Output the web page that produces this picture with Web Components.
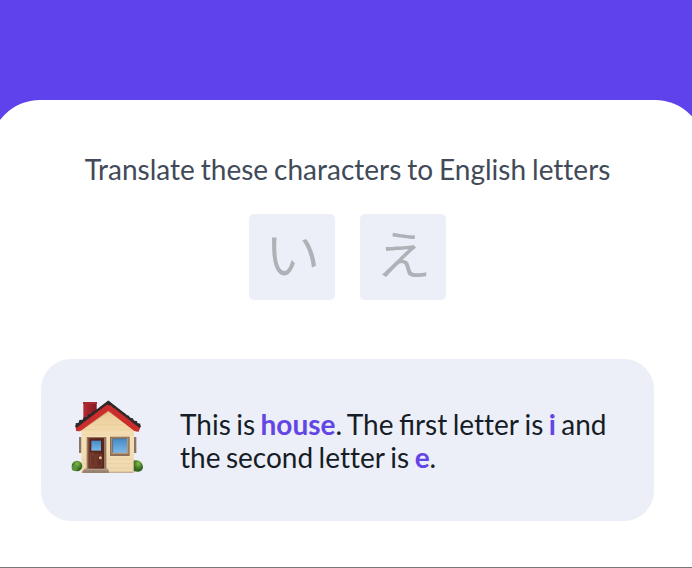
<!DOCTYPE html>
<html lang="en">
<head>
<meta charset="utf-8">
<title>Translate</title>
<style>
html,body{margin:0;height:568px;overflow:hidden;background:#6042ed}
body{font-family:Lato,"Noto Sans CJK JP",sans-serif}
.plain{font-variant-ligatures:none}
</style>
</head>
<body>
<lesson-page>
  <prompt-title>Translate these characters to English letters</prompt-title>
  <kana-row slot="kana"><kana-tile>い</kana-tile><kana-tile>え</kana-tile></kana-row>
  <hint-card slot="hint">
    <house-icon slot="icon"></house-icon>
    This is <key-word>house</key-word>. The first <span class="plain">letter</span> is <key-word>i</key-word> and<br>the second <span class="plain">letter</span> is <key-word>e</key-word>.
  </hint-card>
</lesson-page>
<script>
const define = (name, html) => {
  const t = document.createElement('template');
  t.innerHTML = html;
  customElements.define(name, class extends HTMLElement {
    constructor() {
      super();
      this.attachShadow({mode: 'open'}).append(t.content.cloneNode(true));
    }
  });
};
define('lesson-page', `<style>
:host{display:block;box-sizing:border-box;height:568px;padding-top:100px;background:#6042ed;border-bottom:1px solid #77777b;overflow:hidden}
main{display:flex;flex-direction:column;align-items:center;box-sizing:border-box;width:715px;height:500px;margin-left:-10px;padding:49px 0 0;border-radius:50px 50px 0 0;background:#fff}
</style><main><slot></slot><slot name="kana"></slot><slot name="hint"></slot></main>`);
define('prompt-title', `<style>
:host{display:block;font-size:28px;line-height:40px;height:40px;color:#414a58;white-space:nowrap;word-spacing:-1.2px;font-variant-ligatures:none}
</style><slot></slot>`);
define('kana-row', `<style>
:host{display:flex;gap:25px;margin-top:25px}
</style><slot></slot>`);
define('kana-tile', `<style>
:host{display:flex;align-items:center;justify-content:center;width:86px;height:86px;border-radius:5px;background:#eceff7;color:#aeb1b6;font:350 53px/77px "Noto Sans CJK JP DemiLight","Noto Sans CJK JP",sans-serif}
span{display:block;height:86px;transform:scaleX(1.06)}
</style><span><slot></slot></span>`);
define('hint-card', `<style>
:host{display:flex;align-items:center;box-sizing:border-box;width:613px;height:162px;margin-top:59px;padding:0 0 0 19px;border-radius:30px;background:#eceff7;color:#171d26;font-size:28px;line-height:33px;white-space:nowrap;word-spacing:-1.7px}
p{margin:1px 0 0 20px}
</style><slot name="icon"></slot><p><slot></slot></p>`);
define('key-word', `<style>
:host{display:inline;font-weight:700;color:#6345e5}
</style><slot></slot>`);
define('house-icon', `<style>
:host{display:block;width:100px;height:95px;margin-top:-5px}
svg{display:block}
</style><svg width="100" height="95" viewBox="0 0 300 285">
<defs>
<linearGradient id="wall" x2="0" y2="1"><stop stop-color="#e8c68e"/><stop offset=".45" stop-color="#f5dfb4"/><stop offset="1" stop-color="#efd9af"/></linearGradient>
<linearGradient id="chim"><stop stop-color="#b52a31"/><stop offset="1" stop-color="#811820"/></linearGradient>
<linearGradient id="glass" x2="0" y2="1"><stop stop-color="#468ac7"/><stop offset="1" stop-color="#7ab8e7"/></linearGradient>
<linearGradient id="door"><stop stop-color="#74382a"/><stop offset="1" stop-color="#56251d"/></linearGradient>
<radialGradient id="bush" cx=".5" cy=".3"><stop stop-color="#84bf45"/><stop offset="1" stop-color="#356723"/></radialGradient>
</defs>
<path d="M57 141h8v48h-8zM221 141h8v48h-8z" fill="#8b7465"/>
<path d="M70 37h40v50H70z" fill="url(#chim)"/>
<path d="M69 36h42v6H69z" fill="#a42930"/>
<path d="M64 112L145 50l77 62v134H64z" fill="url(#wall)"/>
<path d="M102 104h86M66 119h154M66 134h154M66 208h154M66 221h154M66 234h154" stroke="#d9bd8a" stroke-width="1.4" opacity=".5"/>
<path d="M55 124L145 62l88 62" fill="none" stroke="#b78c60" stroke-width="7" opacity=".5"/>
<path d="M47 113L145 36l96 76-5 13-13-2-78-61-83 60-13 2z" fill="#cb2c2c"/>
<path d="M47 112L145 33l96 77v-9l-9-2-1-6-10-1-2-7-10-1-2-7-10-1-2-7-10-1-3-7-10-1-3-7-10 0-3-7-10 0-6-3-8 4-9 2-3 7-10 1-3 7-10 1-3 7-10 1-3 8-10 1-3 7-10 1-2 8-9 2z" fill="#2d282a"/>
<path d="M47 111L145 36l96 75" fill="none" stroke="#2d282a" stroke-width="7"/>
<circle cx="51" cy="228" r="16" fill="url(#bush)"/><circle cx="44" cy="234" r="9" fill="#5c9438"/>
<path d="M221 212c15-5 27 5 28 20-2 14-14 15-28 12z" fill="url(#bush)"/>
<path d="M65 245h156v3H65z" fill="#b79b79"/>
<path d="M80 141h59v99H80z" fill="#94775e"/><path d="M85 144h47v93H85z" fill="url(#door)"/>
<path d="M90 148h36v37H90z" fill="#512218"/><path d="M94 152h29v30H94z" fill="url(#glass)"/>
<path d="M92 194h13v34H92zM111 194h13v34h-13z" fill="none" stroke="#8a4a37" stroke-width="2"/>
<circle cx="121" cy="203" r="4.5" fill="#e8ba83"/>
<path d="M75 236h67l5 8v5H68v-6z" fill="#98816f"/><path d="M75 236h67l4 5H71z" fill="#b09a86"/>
<path d="M150 140h59v58h-59z" fill="#8d7057"/><path d="M154 143h51v49h-51z" fill="#b59877"/><path d="M158 146h43v42h-43z" fill="url(#glass)"/>
<path d="M158 188v-42h43" fill="none" stroke="#4c5968" stroke-width="2"/>
</svg>`);
</script>
</body>
</html>
